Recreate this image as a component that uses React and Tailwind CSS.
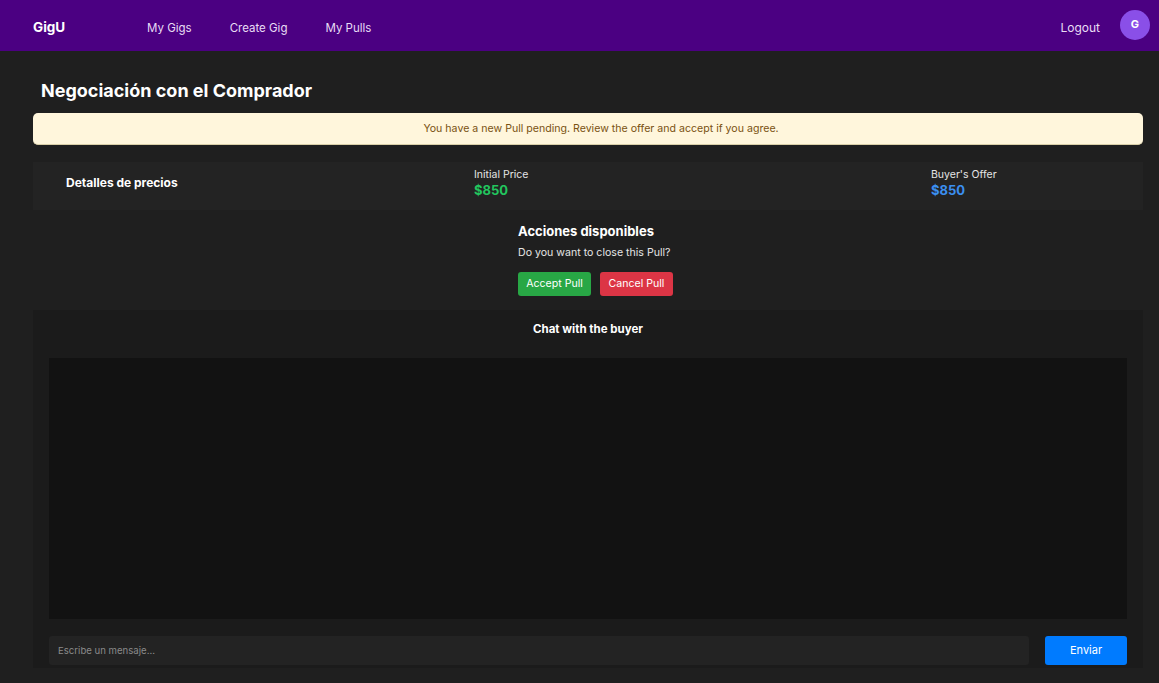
import React, { useState } from "react";

const Navbar = () => (
  <nav className="h-[51px] bg-[#4b0082] flex items-center pl-[33px] pr-[9px] pt-[4px] text-white">
    <span className="text-[13.5px] font-bold w-[114px]">GigU</span>
    <div className="flex items-center gap-[38px] pt-[2px] text-[11.5px] text-[#e8dcf5]">
      <a href="#">My Gigs</a>
      <a href="#">Create Gig</a>
      <a href="#">My Pulls</a>
    </div>
    <div className="ml-auto flex items-center gap-[20px]">
      <a href="#" className="text-[12px] text-[#e8dcf5]">Logout</a>
      <div className="w-[30px] h-[30px] -mt-[6px] rounded-full bg-[#8a4fe8] flex items-center justify-center text-[11px] font-bold">
        G
      </div>
    </div>
  </nav>
);

const App = () => {
  const [message, setMessage] = useState("");

  return (
    <div className="min-h-[683px] bg-[#1f1f1f] font-['Inter',sans-serif] text-white">
      <Navbar />
      <main className="pl-[33px] pr-[16px]">
        <h1 className="pl-[8px] pt-[28px] text-[18px] leading-[24px] font-bold">
          Negociación con el Comprador
        </h1>

        <div className="mt-[10px] h-[32px] rounded-[5px] bg-[#fff6dc] border-b border-[#d9cfa8] flex items-center justify-center pl-[26px] pt-[1px] text-[10.6px] text-[#7a5212]">
          You have a new Pull pending. Review the offer and accept if you agree.
        </div>

        <section className="mt-[17px] h-[48px] bg-[#232323] flex items-center pl-[33px] pb-[6px]">
          <h2 className="w-[408px] text-[12px] font-bold">Detalles de precios</h2>
          <div className="w-[457px]">
            <p className="text-[10.5px] leading-[14px] text-[#e5e5e5]">Initial Price</p>
            <p className="text-[13px] leading-[16px] font-bold text-[#22c55e]">$850</p>
          </div>
          <div>
            <p className="text-[10.5px] leading-[14px] text-[#e5e5e5]">Buyer's Offer</p>
            <p className="text-[13px] leading-[16px] font-bold text-[#3b8ff0]">$850</p>
          </div>
        </section>

        <section className="flex justify-center pt-[12px] pb-[14px]">
          <div className="ml-[15px]">
            <h3 className="text-[13px] leading-[18px] font-bold">Acciones disponibles</h3>
            <p className="mt-[6px] text-[10.6px] leading-[14px] text-[#e5e5e5]">Do you want to close this Pull?</p>
            <div className="mt-[12px] flex gap-[9px]">
              <button className="w-[73px] h-[24px] rounded-[3px] bg-[#28a745] text-[10.6px] text-white">
                Accept Pull
              </button>
              <button className="w-[73px] h-[24px] rounded-[3px] bg-[#dc3545] text-[10.6px] text-white">
                Cancel Pull
              </button>
            </div>
          </div>
        </section>

        <section className="bg-[#1b1b1b] px-[16px] pt-[11px] pb-[3px]">
          <h3 className="text-center text-[11.5px] leading-[16px] font-bold">Chat with the buyer</h3>
          <div className="mt-[21px] h-[261px] bg-[#121212]"></div>
          <form
            className="mt-[17px] flex gap-[16px]"
            onSubmit={(e) => {
              e.preventDefault();
              setMessage("");
            }}
          >
            <input
              value={message}
              onChange={(e) => setMessage(e.target.value)}
              placeholder="Escribe un mensaje..."
              className="flex-1 h-[29px] rounded-[3px] bg-[#232323] px-[9px] text-[9.6px] text-white placeholder:text-[#8a8a8a] outline-none"
            />
            <button type="submit" className="w-[82px] h-[29px] rounded-[3px] bg-[#007bff] text-[11px] text-white">
              Enviar
            </button>
          </form>
        </section>
      </main>
    </div>
  );
};

export default App;
